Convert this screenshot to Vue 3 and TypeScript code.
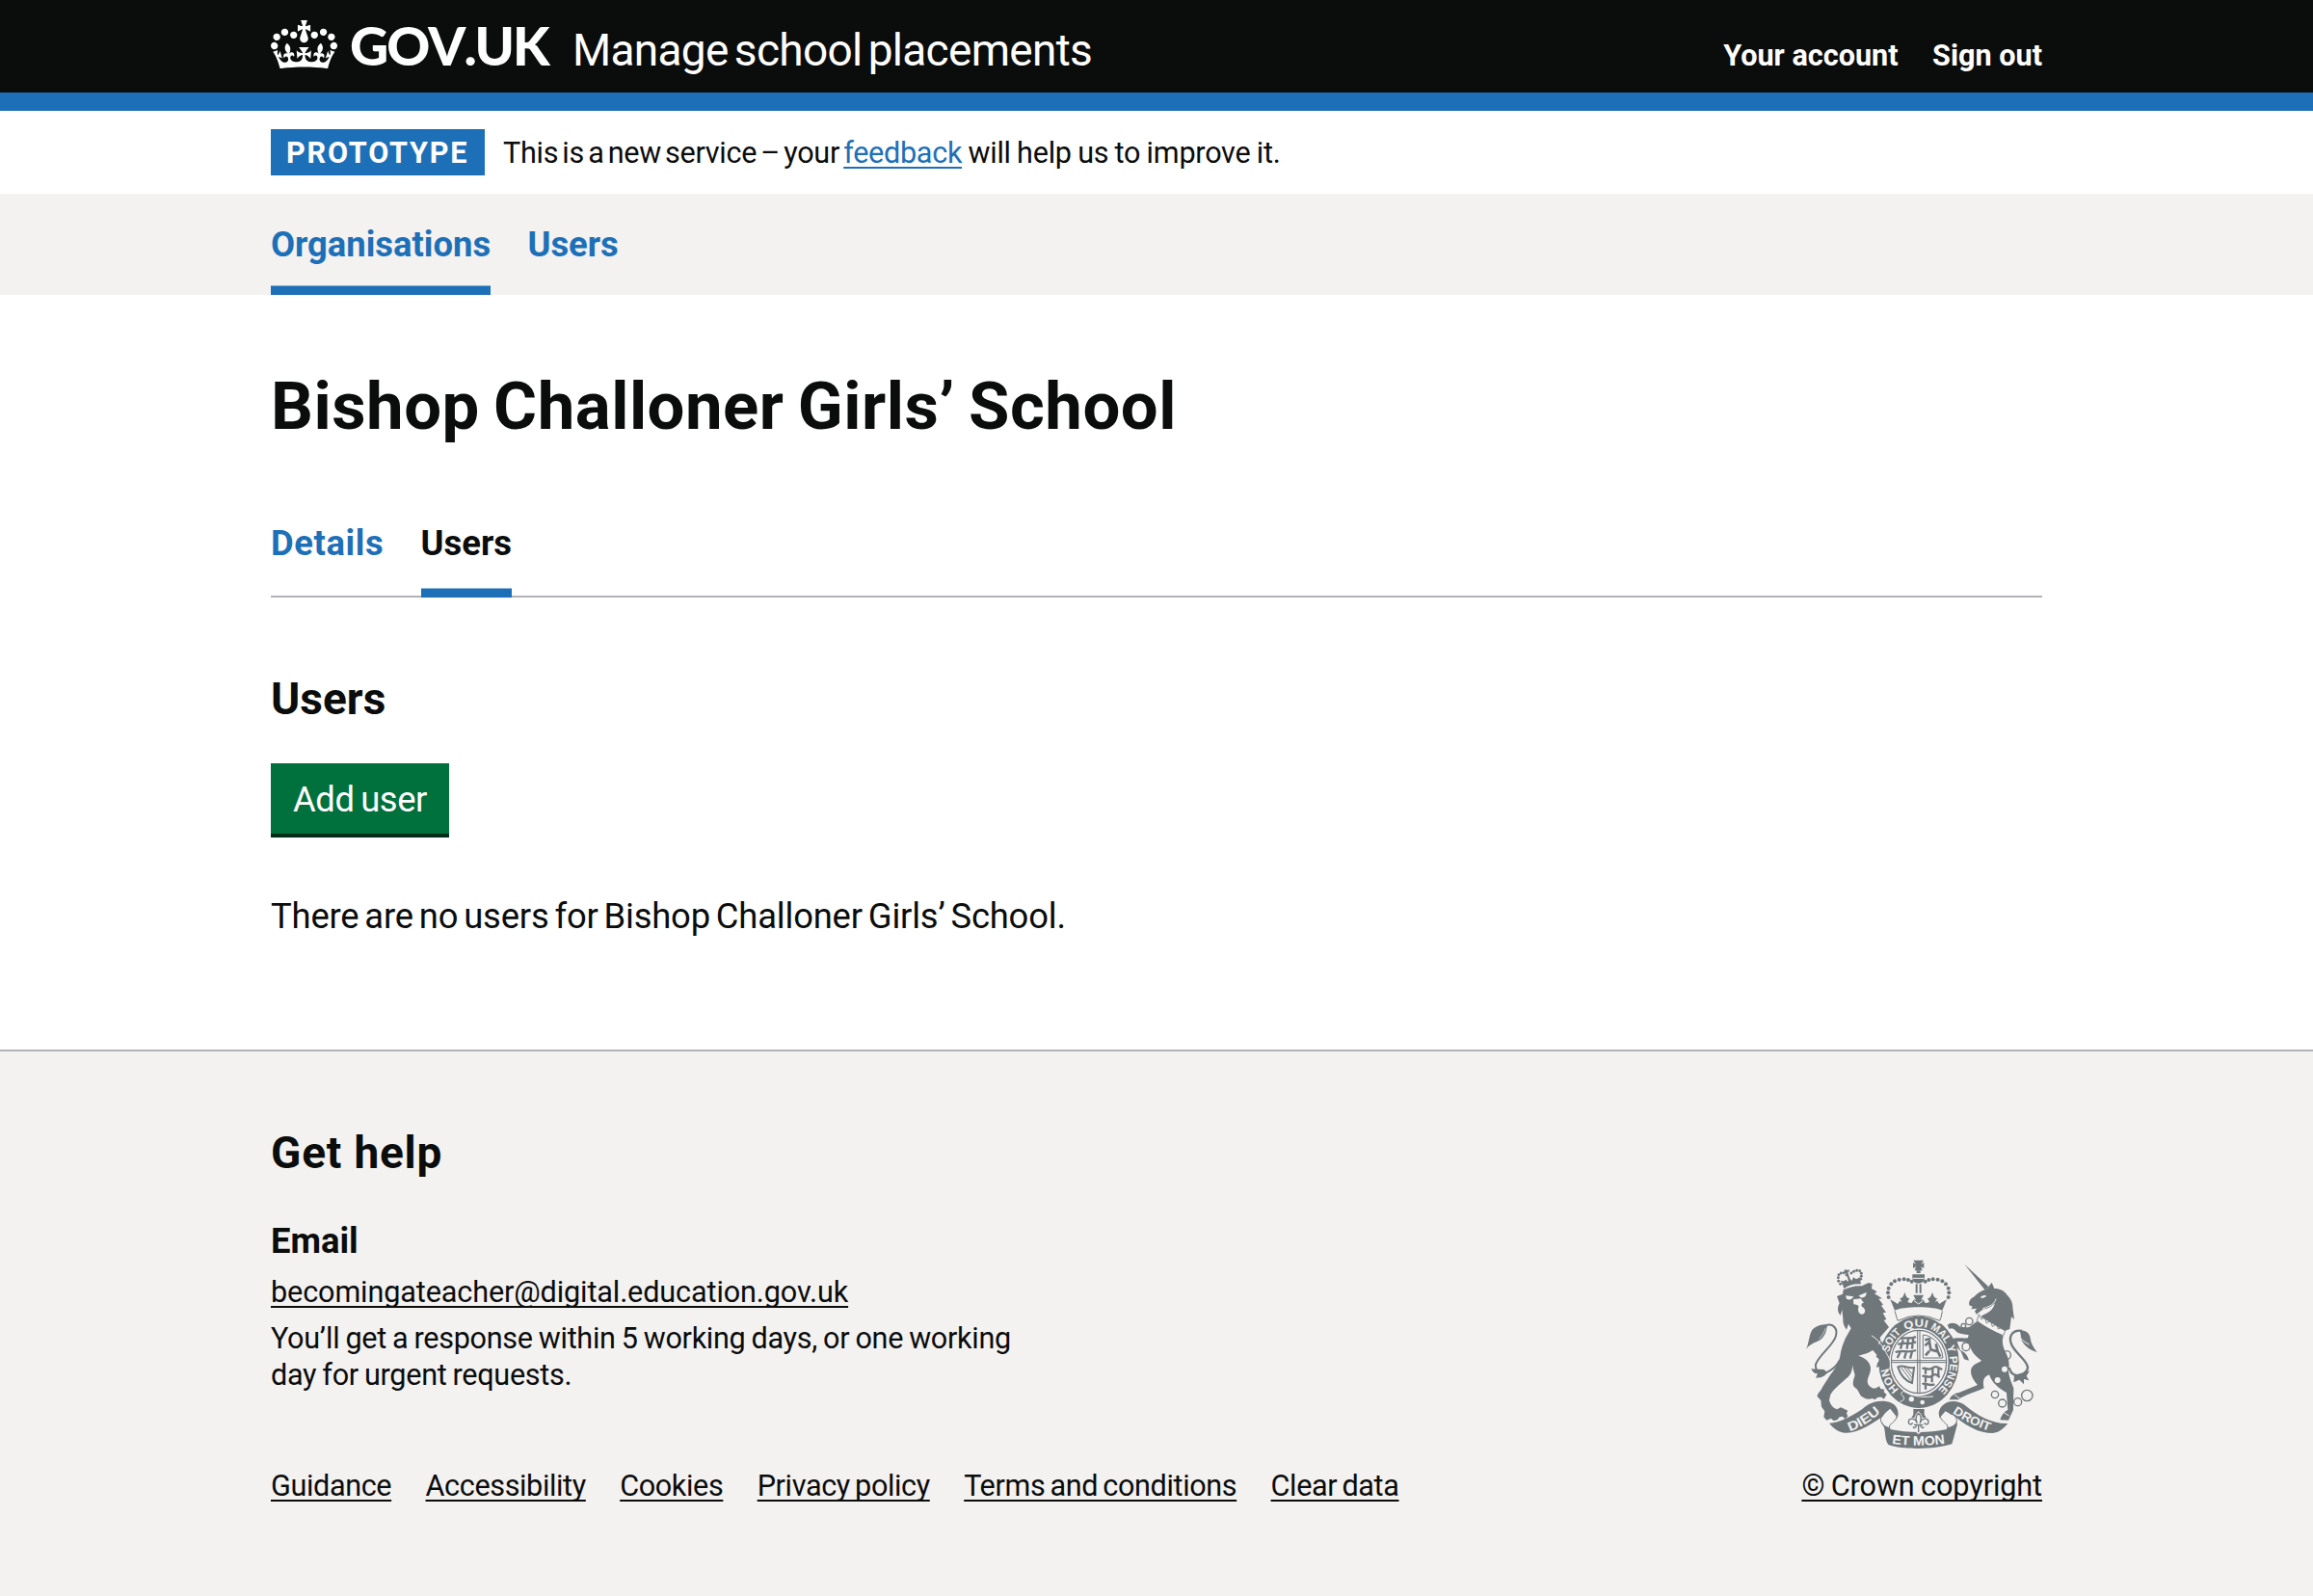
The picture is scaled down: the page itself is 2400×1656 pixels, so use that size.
<script setup lang="ts">
interface NavItem {
  label: string
  current?: boolean
}

const accountLinks: string[] = ['Your account', 'Sign out']
const primaryNav: NavItem[] = [{ label: 'Organisations', current: true }, { label: 'Users' }]
const tabs: NavItem[] = [{ label: 'Details' }, { label: 'Users', current: true }]
const footerLinks: string[] = [
  'Guidance',
  'Accessibility',
  'Cookies',
  'Privacy policy',
  'Terms and conditions',
  'Clear data',
]
const schoolName = 'Bishop Challoner Girls’ School'

// Pearls along the left arch of the royal crown; the right arch mirrors them.
const pearls: [number, number][] = [
  [299, 153], [297, 139], [299, 125], [307, 112], [318, 103], [332, 98], [347, 97], [360, 99], [371, 104],
]
// Pearls of the small crown on the lion's head.
const smallPearls: [number, number][] = [
  [142, 92], [143, 103], [149, 112], [144, 83], [151, 78], [160, 77], [168, 84],
  [183, 78], [191, 73], [200, 70], [209, 71], [214, 79], [214, 88], [212, 97],
]
// Words of the garter motto: text, start along the ring (0-400), drawn length.
const motto: [string, number, number][] = [
  ['HON', 42, 76], ['SOIT', 118, 74], ['QUI', 173, 70], ['MAL', 222, 68], ['Y PENSE', 269, 148],
]
</script>

<template>
  <div class="page">
    <header class="header">
      <div class="container header-row">
        <svg class="crown" viewBox="0 0 132 97" aria-hidden="true">
          <path
            fill="#fff"
            fill-rule="evenodd"
            d="M25 30.2c3.5 1.5 7.7-.2 9.1-3.7 1.5-3.6-.2-7.8-3.9-9.2-3.6-1.4-7.6.3-9.1 3.9-1.4 3.5.3 7.5 3.9 9zM9 39.5c3.6 1.5 7.8-.2 9.2-3.7 1.5-3.6-.2-7.8-3.9-9.1-3.6-1.5-7.6.2-9.1 3.8-1.4 3.5.3 7.5 3.8 9zM4.4 57.2c3.5 1.5 7.7-.2 9.1-3.8 1.5-3.6-.2-7.7-3.9-9.1-3.5-1.5-7.6.3-9.1 3.8-1.4 3.5.3 7.6 3.9 9.1zm38.3-21.4c3.5 1.5 7.7-.2 9.1-3.8 1.5-3.6-.2-7.7-3.9-9.1-3.6-1.5-7.6.3-9.1 3.8-1.3 3.6.4 7.7 3.9 9.1zm64.4-5.6c-3.6 1.5-7.8-.2-9.1-3.7-1.5-3.6.2-7.8 3.8-9.2 3.6-1.4 7.7.3 9.2 3.9 1.3 3.5-.4 7.5-3.9 9zm15.9 9.3c-3.6 1.5-7.7-.2-9.1-3.7-1.5-3.6.2-7.8 3.7-9.1 3.6-1.5 7.7.2 9.2 3.8 1.5 3.5-.3 7.5-3.8 9zm4.7 17.7c-3.6 1.5-7.8-.2-9.2-3.8-1.5-3.6.2-7.7 3.9-9.1 3.6-1.5 7.7.3 9.2 3.8 1.3 3.5-.4 7.6-3.9 9.1zM89.3 35.8c-3.6 1.5-7.8-.2-9.2-3.8-1.4-3.6.2-7.7 3.9-9.1 3.6-1.5 7.7.3 9.2 3.8 1.4 3.6-.3 7.7-3.9 9.1zM69.7 17.7l8.9 4.7V9.3l-8.9 2.8c-.2-.3-.5-.6-.9-.9L72.4 0H59.6l3.5 11.2c-.3.3-.6.5-.9.9l-8.8-2.8v13.1l8.8-4.7c.3.3.6.7.9.9l-5 15.4v.1c-.2.8-.4 1.6-.4 2.4 0 4.1 3.1 7.5 7 8.1h.2c.3 0 .7.1 1 .1.4 0 .7 0 1-.1h.2c4-.6 7.1-4.1 7.1-8.1 0-.8-.1-1.7-.4-2.4V34l-5.1-15.4c.4-.2.7-.6 1-.9zM66 92.8c16.9 0 32.8 1.1 47.1 3.2 4-16.9 8.9-26.7 14-33.5l-9.6-3.4c1 4.9 1.1 7.2 0 10.2-1.5-1.4-3-4.3-4.2-8.7L108.6 76c2.8-2 5-3.2 7.5-3.3-4.4 9.4-10 11.9-13.6 11.2-4.3-.8-6.3-4.6-5.6-7.9 1-4.7 5.7-5.9 8-.5 4.3-8.7-3-11.4-7.6-8.8 7.1-7.2 7.9-13.5 2.1-21.1-8 6.1-8.1 12.3-4.5 20.8-4.7-5.4-12.1-2.5-9.5 6.2 3.4-5.2 7.9-2 7.2 3.1-.6 4.3-6.4 7.8-13.5 7.2-10.3-.9-10.9-8-11.2-13.8 2.5-.5 7.1 1.8 11 7.3L80.2 60c-4.1 4.4-8 5.3-12.3 5.4 1.4-4.4 8-11.6 8-11.6H55.5s6.4 7.2 7.9 11.6c-4.2-.1-8-1-12.3-5.4l1.4 16.4c3.9-5.5 8.5-7.7 10.9-7.3-.3 5.8-.9 12.8-11.1 13.8-7.2.6-12.9-2.9-13.5-7.2-.7-5 3.8-8.3 7.1-3.1 2.7-8.7-4.6-11.6-9.4-6.2 3.7-8.5 3.6-14.7-4.6-20.8-5.8 7.6-5 13.9 2.2 21.1-4.7-2.6-11.9.1-7.7 8.8 2.3-5.5 7.1-4.2 8.1.5.7 3.3-1.3 7.1-5.7 7.9-3.5.7-9-1.8-13.5-11.2 2.5.1 4.7 1.3 7.5 3.3l-4.7-15.4c-1.2 4.4-2.7 7.2-4.3 8.7-1.1-3-.9-5.3 0-10.2l-9.5 3.4c5 6.9 9.9 16.7 14 33.5 14.8-2.1 30.8-3.2 47.7-3.2z"
          />
        </svg>
        <a class="logotype">GOV.UK</a>
        <a class="service">Manage school placements</a>
        <nav class="account">
          <a v-for="link in accountLinks" :key="link">{{ link }}</a>
        </nav>
      </div>
    </header>

    <div class="container phase">
      <strong class="tag">PROTOTYPE</strong>
      <span class="phase-text">This is a new service – your <a class="feedback">feedback</a><span class="phase-end"> will help us to improve it.</span></span>
    </div>

    <nav class="primary">
      <div class="container primary-row">
        <a v-for="item in primaryNav" :key="item.label" class="primary-link" :class="{ current: item.current }">{{ item.label }}</a>
      </div>
    </nav>

    <main class="container main">
      <h1>{{ schoolName }}</h1>
      <nav class="tabs">
        <a v-for="tab in tabs" :key="tab.label" class="tab" :class="{ current: tab.current }">{{ tab.label }}</a>
      </nav>
      <h2>Users</h2>
      <button class="button" type="button">Add user</button>
      <p class="empty">There are no users for {{ schoolName }}.</p>
    </main>

    <footer class="footer">
      <div class="container footer-row">
        <div>
          <h2 class="help">Get help</h2>
          <h3>Email</h3>
          <a class="email">becomingateacher@digital.education.gov.uk</a>
          <p class="response">You’ll get a response within 5 working days, or one working<br />day for urgent requests.</p>
          <div class="footer-links">
            <a v-for="link in footerLinks" :key="link">{{ link }}</a>
          </div>
        </div>
        <div class="copyright">
          <svg class="crest" viewBox="36 30 729 600" aria-hidden="true">
            <defs>
              <path id="motto" pathLength="400" d="M393 465A97 110 0 0 1 296 355A97 110 0 0 1 393 245A97 110 0 0 1 490 355A97 110 0 0 1 393 465" />
              <path id="ribbon-left" d="M178 571Q232 552 276 509" />
              <path id="ribbon-mid" d="M309 609Q392 620 476 608" />
              <path id="ribbon-right" d="M498 513Q545 547 616 571" />
            </defs>

            <!-- small crown and lion -->
            <g class="ink">
              <path d="M158 119L149 100C155 104 160 104 165 98L172 104L178 94L184 102L190 90C195 98 202 98 208 90L213 112C193 110 174 114 160 127Z" />
              <path d="M162 66l9 3 4-3 2 7-5 2 8 26-6 2-7-25-6 1Z" />
              <circle v-for="p in smallPearls" :key="`s${p[0]}-${p[1]}`" :cx="p[0]" :cy="p[1]" r="4.4" />
              <path d="M138 150L156 143L158 130C176 122 196 116 216 118L236 108L248 111L246 126L263 136L255 142L272 152L279 157L268 158L282 176L276 179L291 200L281 202L292 222L284 225L300 246L272 278L303 350L303 376L294 368L286 382L281 364L270 366L262 372L264 360L272 348L260 338L262 332L250 318L233 327L205 335C228 342 245 358 243 378C240 400 228 408 236 425C244 435 252 438 260 436L270 430L274 438L286 440L284 448L293 456L284 470L277 464L266 464L256 472L248 468C236 474 222 468 212 460C206 448 202 438 194 434C184 426 189 412 194 396C192 384 188 378 186 364C186 378 184 390 172 402C156 416 128 438 118 456L114 474C118 488 126 498 138 502L150 496L160 500L172 506L168 514L172 524L163 532L156 524L146 526L140 534L128 538L120 530L106 536L97 526L100 508L90 494L88 474L77 462C76 452 88 446 92 434L118 394C136 372 144 354 148 336C150 316 158 296 165 280L182 250L174 236L168 254C160 244 156 232 157 220L154 192L149 210C140 200 138 186 146 172Z" />
              <path d="M41 316C50 302 50 278 58 260C68 242 88 238 108 238C106 262 98 284 74 292C60 297 50 304 41 316Z" />
              <path d="M98 378L58 376C62 386 70 392 78 391L72 404C84 404 100 402 108 388Z" />
            </g>
            <path class="line" stroke-width="6" d="M104 240C128 234 142 252 134 276C124 306 84 330 72 362C70 384 86 396 104 388C122 380 138 366 146 350" />
            <path class="gap" stroke-width="2" d="M82 282C92 276 98 262 102 250" />
            <g class="paper">
              <path d="M165 148L190 151C186 160 176 163 168 158Z" />
              <path d="M206 148L230 138C230 150 222 156 212 154Z" />
              <path d="M189 160L212 157L222 171C216 170 212 176 216 182C230 190 228 205 215 206C204 204 202 190 206 182C202 174 194 178 190 174Z" />
            </g>

            <!-- garter and shield -->
            <ellipse class="ink" cx="393" cy="355" rx="125" ry="143" />
            <ellipse class="paper" cx="393" cy="355" rx="92" ry="105" />
            <ellipse class="line" cx="393" cy="354" rx="86" ry="98" stroke-width="3.5" />
            <g class="line" stroke-width="3">
              <path d="M389 257V451M396 257V451M308 350H478M308 356H478" />
              <path stroke-width="7" d="M336 282C348 276 364 286 384 276M328 300C346 292 362 302 384 292M344 286L336 314M360 284L356 314M376 278L372 314M320 324C340 316 362 328 384 318M336 322L326 342M354 322L348 344M372 322L366 344" />
              <path stroke-width="7" d="M404 376C414 368 420 384 434 374S450 372 466 378M404 400C414 392 420 408 434 398S448 396 458 402M404 424C414 416 420 432 442 424M414 372V392M436 374V396M414 398V418M434 398V418M414 424V440M454 376V396" />
              <path stroke-width="8" d="M412 304L426 292L430 316L452 322L446 298M426 320L414 334M452 322L460 338M412 286L430 282" />
              <path d="M406 270C436 272 464 300 468 342H406Z" />
              <path stroke-width="6" d="M328 370C336 396 354 414 372 420L378 372C358 376 344 362 328 370Z" />
              <path stroke-width="3" d="M338 372L368 412M348 372L372 404M358 375L374 394" />
            </g>
            <text v-for="m in motto" :key="m[0]" class="motto"><textPath href="#motto" :startOffset="m[1]" :textLength="m[2]" lengthAdjust="spacingAndGlyphs">{{ m[0] }}</textPath></text>
            <path class="ink" d="M262 322L292 318L302 344V376L292 368L286 382L280 364L262 372L264 358L274 348Z" />
            <path class="gap" stroke-width="3" d="M246 272C264 284 276 298 284 314C294 330 300 340 304 352C308 372 300 380 286 388" />
            <path class="gap" stroke-width="3" d="M304 246C288 264 276 280 268 300" />
            <circle class="paper" cx="370" cy="470" r="8" />
            <circle class="paper" cx="404" cy="480" r="7" />
            <path class="ink" d="M322 454C330 444 340 438 348 446L342 458C352 464 352 476 340 480C328 480 320 470 322 454Z" />
            <path class="gap" stroke-width="3" d="M350 444C338 446 336 454 342 460C352 466 346 476 334 478M346 446Q380 468 438 462" />

            <!-- royal crown -->
            <path class="paper" d="M316 190H468L460 236Q392 186 324 236Z" />
            <g class="ink">
              <path d="M376 38H408L400 50L409 45V63L400 58L404 70H380L384 58L375 63V45L384 50Z" />
              <path d="M386 70H398V78H386ZM373 82H411V94C410 106 400 110 392 110S374 106 373 94Z" />
              <path d="M383 112H389V140H383ZM395 112H401V140H395Z" />
              <circle v-for="p in pearls" :key="`l${p[0]}-${p[1]}`" :cx="p[0]" :cy="p[1]" r="6" />
              <circle v-for="p in pearls" :key="`r${p[0]}-${p[1]}`" :cx="784 - p[0]" :cy="p[1]" r="6" />
              <path d="M304 160L322 170C326 176 330 172 333 164L340 168L334 156C342 156 345 150 349 137C353 150 356 156 364 156L358 168L370 172L378 160L384 162L376 146H408L400 162L406 160L414 172L426 168L420 156C428 156 431 150 435 137C439 150 442 156 450 156L444 168L451 164C454 172 458 176 462 170L480 160L466 194C440 180 344 180 318 194Z" />
            </g>
            <path class="gap" stroke-width="3" d="M374 94H410M378 164L392 174L406 164" />
            <path class="line" stroke-width="3" d="M318 196C322 206 322 214 328 226Q392 194 458 226C464 214 464 206 466 196" />

            <!-- unicorn -->
            <g transform="translate(360 0)">
              <g class="ink">
                <path d="M175 50L250 120L240 132Z" />
                <path d="M244 128L260 107L268 126C286 126 300 134 308 146C320 158 326 172 325 184L330 222L321 214L316 252L300 258L226 214C236 204 262 202 270 172C256 184 246 190 234 190L212 206L207 196L214 188L196 190L200 182L190 178C187 164 196 156 204 152C214 142 226 132 244 128Z" />
                <path d="M214 228L296 274C290 296 296 308 304 326C314 344 316 364 312 382C314 404 322 420 328 436L327 504L312 536L286 535C290 520 300 508 310 504L306 450C286 438 262 424 252 394C236 400 230 414 236 436C214 446 186 454 164 466L156 472H128C132 460 144 452 158 450L216 426C204 412 192 396 196 376C202 360 222 356 228 350C206 336 194 318 190 298C178 292 166 290 152 292L162 318C174 322 186 334 189 350L174 346L164 322C152 310 142 298 134 284C150 276 168 282 186 280L188 270C172 268 156 268 148 258C140 248 134 248 128 252L122 240C130 230 146 232 156 240C164 250 178 248 190 246Z" />
                <path d="M348 256C366 256 378 264 380 280C382 298 390 310 401 324C376 318 356 300 350 280Z" />
                <path d="M378 382L330 396L328 418L346 410L360 424L360 408L376 412L368 398Z" />
              </g>
              <path class="line" stroke-width="7" d="M354 258C328 252 312 272 320 296C328 324 368 346 372 370C372 388 350 398 336 396C322 394 318 384 314 372" />
              <path class="gap" stroke-width="3" d="M348 266C346 284 362 292 376 300" />
              <path class="gap" stroke-width="12" d="M216 214C236 238 268 254 298 264" />
              <path class="line" stroke-width="2.5" d="M214 226C236 246 268 262 296 272L304 252M214 226L220 206L228 222L238 216L244 234L256 226L262 244L276 236L280 252L292 246" />
              <path class="paper" d="M224 154C232 146 240 146 244 150L232 156Z" />
              <path class="gap" stroke-width="3" d="M232 188C256 182 270 172 273 158" />
              <g class="line" stroke-width="4">
                <circle cx="190" cy="228" r="11" /><circle cx="172" cy="242" r="7" />
                <ellipse cx="308" cy="333" rx="11" ry="13" />
                <circle cx="270" cy="456" r="11" /><circle cx="293" cy="483" r="12" />
                <circle cx="341" cy="479" r="12" /><circle cx="370" cy="459" r="17" />
              </g>
              <ellipse class="paper" cx="180" cy="307" rx="12" ry="14" />
              <ellipse class="line" stroke-width="4" cx="180" cy="307" rx="12" ry="13" />
              <circle class="paper" cx="300" cy="377" r="9" />
              <circle class="paper" cx="278" cy="411" r="9" />
              <path class="gap" stroke-width="3" d="M144 456L162 470M298 512L314 522" />
            </g>

            <!-- fleur-de-lis and ribbons -->
            <g class="ink">
              <path d="M376 501H410V518L416 528H370L376 518Z" />
              <path d="M114 545C140 546 196 520 228 492C250 476 284 472 308 482C328 492 332 512 326 530C318 548 300 552 304 564C360 576 424 576 480 564C484 552 462 546 458 528C450 510 460 490 482 480C500 474 524 478 540 492C572 520 624 548 670 546C656 562 644 574 622 576C572 576 530 544 498 518C484 526 508 534 513 548C508 566 502 590 496 610C440 628 344 628 298 612C286 596 290 572 284 556C272 540 284 532 290 518C250 544 202 578 164 575C144 574 128 562 114 545Z" />
            </g>
            <path class="paper" d="M306 560C314 550 328 544 326 528L304 500C286 512 274 528 280 544C284 554 296 558 306 560ZM478 560C472 552 456 548 458 528L476 508C490 516 512 528 508 546C502 554 490 558 478 560Z" />
            <path class="line" stroke-width="3" d="M326 512C328 534 310 544 302 552L300 564M300 502C282 514 270 526 276 542C282 556 296 558 304 562M458 512C456 534 476 544 482 552L484 564M482 508C500 516 516 528 510 544C504 556 490 558 480 562" />
            <path class="paper" d="M392 508C402 518 407 528 403 536C412 524 428 526 428 542C428 552 418 558 410 553C408 566 400 574 392 580C384 574 376 566 374 553C366 558 356 552 356 542C356 526 372 524 381 536C377 528 382 518 392 508Z" />
            <path class="line" stroke-width="4" stroke-linejoin="round" d="M392 514C400 522 403 530 397 544C404 526 422 530 423 540C423 552 411 550 411 543M392 514C384 522 381 530 387 544C380 526 362 530 361 540C361 552 373 550 373 543M378 550H406M386 552C384 560 376 562 376 556M398 552C400 560 408 562 408 556M392 552V574" />
            <text class="ribbon"><textPath href="#ribbon-left" textLength="114" lengthAdjust="spacingAndGlyphs">DIEU</textPath></text>
            <text class="ribbon"><textPath href="#ribbon-mid" textLength="166" lengthAdjust="spacingAndGlyphs">ET MON</textPath></text>
            <text class="ribbon small"><textPath href="#ribbon-right" textLength="128" lengthAdjust="spacingAndGlyphs">DROIT</textPath></text>
          </svg>
          <a>© Crown copyright</a>
        </div>
      </div>
    </footer>
  </div>
</template>

<style>
body {
  margin: 0;
}
</style>

<style scoped>
.page {
  display: flex;
  flex-direction: column;
  min-height: 1656px;
  background: #fff;
  color: #0b0c0c;
  font-family: Roboto, "Liberation Sans", sans-serif;
  font-size: 30.6px;
  line-height: 38.3px;
}
.container {
  width: 1838px;
  margin: 0 auto;
}
h1, h2, h3, p {
  margin: 0;
}
.header {
  box-sizing: border-box;
  height: 115px;
  background: #0b0c0c;
  border-bottom: 19px solid #1d70b8;
  color: #fff;
}
.header-row {
  display: flex;
  align-items: baseline;
  padding-top: 16.5px;
}
.crown {
  align-self: flex-start;
  width: 69px;
  height: 50.7px;
  margin-top: 4px;
}
.logotype {
  width: 216px;
  margin-left: 13px;
  font: 900 55.6px/60px Lato, sans-serif;
  font-kerning: none;
  letter-spacing: -2px;
}
.service {
  margin-left: 15px;
  font-size: 46px;
  letter-spacing: -0.7px;
  word-spacing: -4.5px;
}
.account {
  display: flex;
  gap: 35.5px;
  margin-left: auto;
  font-weight: 700;
}
.phase {
  display: flex;
  box-sizing: border-box;
  height: 86px;
  padding-top: 19px;
  line-height: 48px;
}
.tag {
  box-sizing: border-box;
  width: 222px;
  height: 48px;
  padding: 1px 0 0 16px;
  background: #1d70b8;
  color: #fff;
  letter-spacing: 1.8px;
}
.phase-text {
  margin-left: 19px;
  line-height: 50px;
  letter-spacing: -0.3px;
  word-spacing: -3.1px;
}
.phase-end {
  letter-spacing: -0.25px;
  word-spacing: -1px;
}
.feedback {
  color: #1d70b8;
}
.feedback, .email, .footer-links a, .copyright a {
  text-decoration: underline;
  text-decoration-thickness: 2px;
  text-underline-offset: 4px;
  text-decoration-skip-ink: none;
}
.primary {
  background: #f3f2f1;
}
.primary-row, .tabs {
  display: flex;
  gap: 38.3px;
  font-size: 36.4px;
  font-weight: 700;
}
.primary-link {
  color: #1d70b8;
  line-height: 105px;
}
.primary-link.current {
  box-shadow: inset 0 -9.5px #1d70b8;
}
.main {
  padding: 76.4px 0 112.7px;
}
h1 {
  font-size: 68.9px;
  line-height: 80px;
  letter-spacing: 0.5px;
  word-spacing: -3.3px;
}
.tabs {
  height: 112.8px;
  margin-top: 44.8px;
  box-shadow: inset 0 -2px #b1b4b6;
  line-height: 114.8px;
}
.tab {
  color: #1d70b8;
  letter-spacing: 0.6px;
}
.tab.current {
  box-shadow: inset 0 -9.5px #1d70b8;
  color: #0b0c0c;
  letter-spacing: 0;
}
h2 {
  margin-top: 80px;
  font-size: 46px;
  line-height: 50px;
}
.button {
  display: block;
  width: 185px;
  height: 73px;
  margin-top: 42.3px;
  padding: 2px 0 0;
  border: 0;
  background: #00703c;
  box-shadow: 0 4px #002d18;
  color: #fff;
  font: 400 36.4px/72px Roboto, sans-serif;
  letter-spacing: -0.4px;
  word-spacing: -2px;
}
.empty {
  margin-top: 61px;
  font-size: 36.4px;
  line-height: 50px;
  letter-spacing: -0.19px;
  word-spacing: -2.9px;
}
.footer {
  flex: 1;
  border-top: 2px solid #b1b4b6;
  background: #f3f2f1;
}
.footer-row {
  display: flex;
  align-items: flex-end;
  justify-content: space-between;
}
.help {
  letter-spacing: 0.8px;
}
h3 {
  margin-top: 42.6px;
  font-size: 36.4px;
  line-height: 48px;
}
.email {
  display: inline-block;
  margin-top: 10.5px;
  letter-spacing: -0.12px;
}
.response {
  margin-top: 9.5px;
  letter-spacing: -0.3px;
  word-spacing: -1.2px;
}
.footer-links {
  display: flex;
  gap: 35.4px;
  margin-top: 76.6px;
  letter-spacing: -0.38px;
  word-spacing: -2px;
}
.copyright {
  display: flex;
  flex-direction: column;
  align-items: flex-end;
  letter-spacing: -0.1px;
  word-spacing: -1px;
}
.crest {
  width: 243px;
  height: 200px;
  margin: 0 4px 18px 0;
}
.ink {
  fill: #6f777b;
}
.paper {
  fill: #f3f2f1;
}
.line {
  fill: none;
  stroke: #6f777b;
}
.gap {
  fill: none;
  stroke: #f3f2f1;
}
.motto, .ribbon {
  fill: #f3f2f1;
  font-family: "Liberation Sans", sans-serif;
  font-weight: 700;
  letter-spacing: 0;
  word-spacing: 0;
}
.motto {
  font-size: 34px;
}
.ribbon {
  font-size: 41px;
}
.ribbon.small {
  font-size: 38px;
}
</style>
